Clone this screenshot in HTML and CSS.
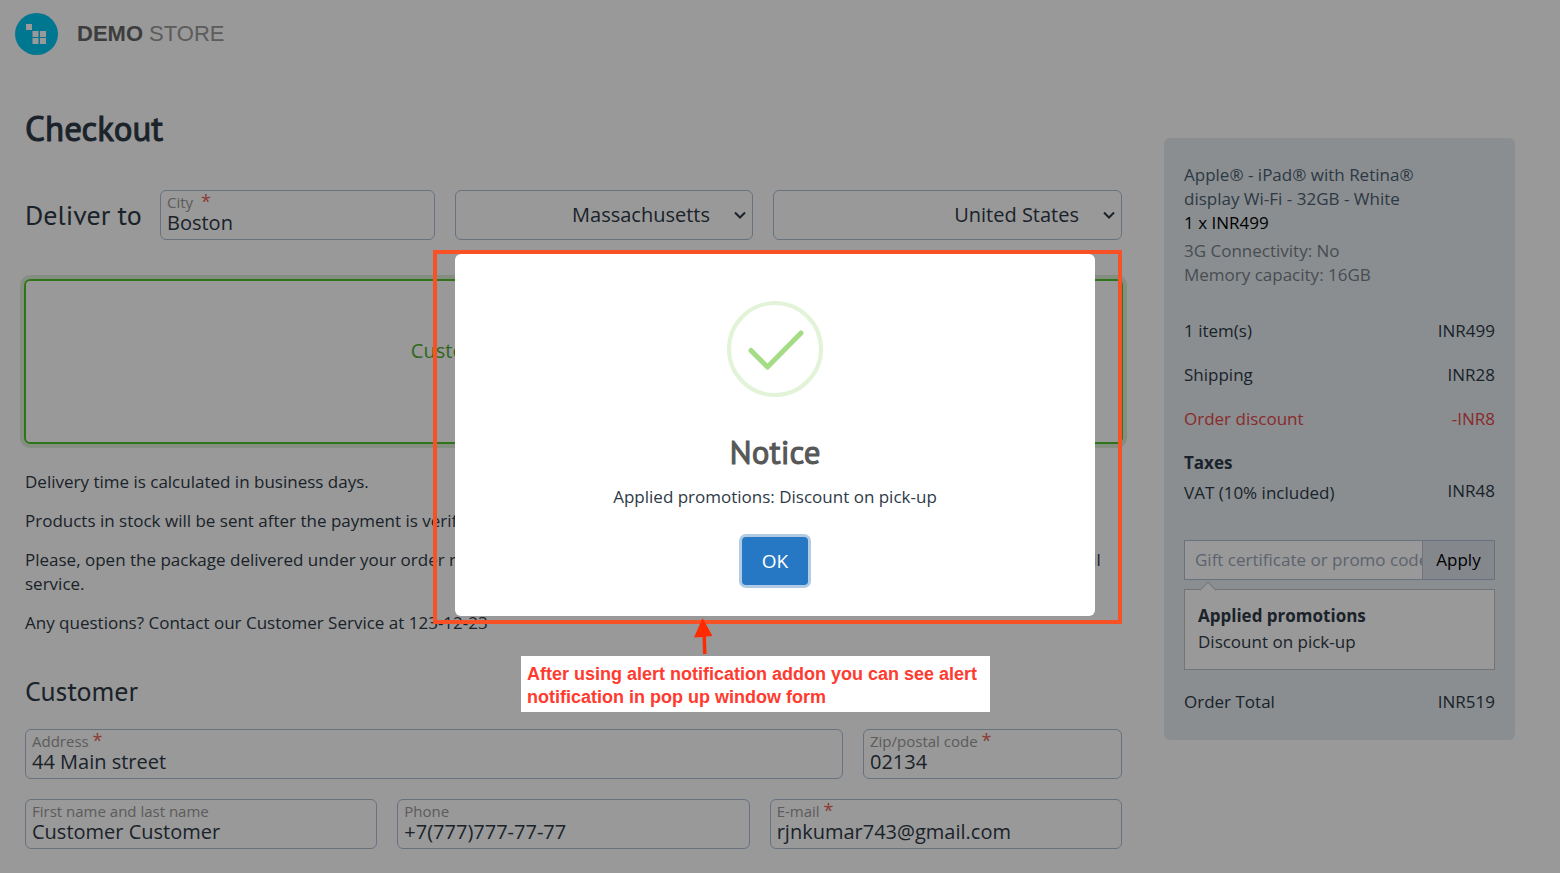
FILE: index.html
```html
<!DOCTYPE html>
<html lang="en">
<head>
<meta charset="utf-8">
<title>Checkout - Demo Store</title>
<link rel="stylesheet" href="styles.css">
</head>
<body>
<div class="page">
  <header class="header">
    <a class="logo" href="#">
      <svg class="logo-mark" width="43" height="42" viewBox="0 0 43 42" aria-hidden="true">
        <ellipse cx="21.500" cy="21" rx="21.500" ry="21" fill="#00c6f0"/>
        <g fill="#fff">
          <rect x="11" y="11" width="6" height="6"/>
          <rect x="17.500" y="18" width="6" height="6"/>
          <rect x="25" y="18" width="6" height="6"/>
          <rect x="17.500" y="25" width="6" height="6"/>
          <rect x="25" y="25" width="6" height="6"/>
        </g>
      </svg>
      <span class="logo-text"><b>DEMO</b> STORE</span>
    </a>
  </header>

  <div class="columns">
    <main class="main">
      <h1 class="title">Checkout</h1>

      <section class="deliver">
        <h2 class="subtitle">Deliver to</h2>
        <div class="field">
          <label for="city">City &nbsp;<span class="required">*</span></label>
          <input id="city" type="text" value="Boston">
        </div>
        <div class="select">
          <select aria-label="State"><option>Massachusetts</option></select>
          <svg class="chevron" width="12" height="8" viewBox="0 0 12 8" aria-hidden="true"><path d="M1 1.500 6 6.500 11 1.500" fill="none" stroke="currentColor" stroke-width="2"/></svg>
        </div>
        <div class="select">
          <select aria-label="Country"><option>United States</option></select>
          <svg class="chevron" width="12" height="8" viewBox="0 0 12 8" aria-hidden="true"><path d="M1 1.500 6 6.500 11 1.500" fill="none" stroke="currentColor" stroke-width="2"/></svg>
        </div>
      </section>

      <button class="method" type="button">Customer pick-up at the store, free</button>

      <section class="notes">
        <p>Delivery time is calculated in business days.</p>
        <p>Products in stock will be sent after the payment is verified.</p>
        <p>Please, open the package delivered under your order number exclusively in the presence of the representative of the courier or the mail service.</p>
        <p>Any questions? Contact our Customer Service at 123-12-23</p>
      </section>

      <section class="customer">
        <h2 class="subtitle">Customer</h2>
        <div class="row row-address">
          <div class="field">
            <label for="address">Address <span class="required">*</span></label>
            <input id="address" type="text" value="44 Main street">
          </div>
          <div class="field">
            <label for="zip">Zip/postal code <span class="required">*</span></label>
            <input id="zip" type="text" value="02134">
          </div>
        </div>
        <div class="row row-contact">
          <div class="field">
            <label for="name">First name and last name</label>
            <input id="name" type="text" value="Customer Customer">
          </div>
          <div class="field">
            <label for="phone">Phone</label>
            <input id="phone" type="tel" value="+7(777)777-77-77">
          </div>
          <div class="field">
            <label for="email">E-mail <span class="required">*</span></label>
            <input id="email" type="email" value="rjnkumar743@gmail.com">
          </div>
        </div>
      </section>
    </main>

    <aside class="summary">
      <div class="product">
        <a class="product-name" href="#">Apple® - iPad® with Retina® display Wi-Fi - 32GB - White</a>
        <div class="product-price">1 x INR499</div>
        <div class="product-options">3G Connectivity: No<br>Memory capacity: 16GB</div>
      </div>
      <dl class="totals">
        <div><dt>1 item(s)</dt><dd>INR499</dd></div>
        <div><dt>Shipping</dt><dd>INR28</dd></div>
        <div class="discount"><dt>Order discount</dt><dd>-INR8</dd></div>
      </dl>
      <div class="taxes">
        <b>Taxes</b>
        <div class="tax-row"><span>VAT (10% included)</span><span class="tax-amount">INR48</span></div>
      </div>
      <form class="promo">
        <input type="text" aria-label="Gift certificate or promo code" placeholder="Gift certificate or promo code">
        <button type="button">Apply</button>
      </form>
      <div class="applied">
        <b>Applied promotions</b>
        <div>Discount on pick-up</div>
      </div>
      <div class="total"><span>Order Total</span><span>INR519</span></div>
    </aside>
  </div>
</div>

<div class="overlay">
  <div class="popup">
    <div class="modal" role="dialog" aria-labelledby="notice-title">
      <svg class="success" width="96" height="96" viewBox="0 0 96 96" aria-hidden="true">
        <circle cx="48" cy="48" r="46" fill="none" stroke="#e2f3d8" stroke-width="4"/>
        <path d="M24 49.500 40.500 66 74 32" fill="none" stroke="#a5dc86" stroke-width="5" stroke-linecap="round" stroke-linejoin="round"/>
      </svg>
      <h2 class="modal-title" id="notice-title">Notice</h2>
      <p class="modal-text">Applied promotions: Discount on pick-up</p>
      <button class="ok" type="button">OK</button>
    </div>
    <div class="frame"></div>
    <div class="callout">
      <svg class="arrow" width="20" height="38" viewBox="0 0 20 38" aria-hidden="true"><path d="M8.500 0 18.500 18 12 18.500 12.500 36H9L8.500 19 0 19.500Z" fill="#ff2a00"/></svg>
      <p>After using alert notification addon you can see alert notification in pop up window form</p>
    </div>
  </div>
</div>
</body>
</html>
```
FILE: styles.css
```css
* {
  box-sizing: border-box;
}

html,
body {
  height: 100%;
}

body {
  margin: 0;
  overflow: hidden;
  background: #fff;
  color: #2e3a47;
  font-family: "Open Sans", "Noto Sans", sans-serif;
  font-size: 17px;
  line-height: 24px;
}

h1,
h2,
p,
dl,
dd {
  margin: 0;
}

a {
  color: inherit;
  text-decoration: none;
}

input,
select,
button {
  min-width: 0;
  border: 0;
  padding: 0;
  background: none;
  color: inherit;
  font: inherit;
}

.header {
  padding: 13px 15px 0;
}

.logo {
  display: flex;
  align-items: center;
  gap: 19px;
}

.logo-text {
  color: #9a9a9a;
  font-family: "Liberation Sans", Arial, sans-serif;
  font-size: 22px;
}

.logo-text b {
  color: #666;
}

.columns {
  display: grid;
  grid-template-columns: minmax(0, 1fr) 351px;
  align-items: start;
  gap: 42px;
  padding: 51px 45px 0 25px;
}

.title,
.subtitle,
.modal-title {
  font-family: "PT Sans", "Noto Sans", sans-serif;
  font-weight: 400;
}

.title,
.modal-title {
  -webkit-text-stroke: 1px currentColor;
}

.title {
  font-size: 35px;
  line-height: 44px;
}

.subtitle {
  font-size: 28px;
  line-height: 36px;
}

.deliver {
  display: grid;
  grid-template-columns: 115px minmax(0, 275fr) minmax(0, 298fr) minmax(0, 349fr);
  align-items: center;
  gap: 20px;
  margin-top: 40px;
}

.deliver .subtitle {
  white-space: nowrap;
}

.field,
.select {
  height: 50px;
  border: 1px solid #acbfd3;
  border-radius: 6px;
}

.field {
  display: flex;
  flex-direction: column;
  padding: 3px 6px 0;
}

.field label {
  color: #999;
  font-size: 15px;
  line-height: 17px;
}

.field input {
  height: 24px;
  font-size: 20px;
  line-height: 24px;
}

.required {
  color: #e86458;
  font-size: 18px;
  line-height: 1px;
}

.select {
  display: flex;
  align-items: center;
  padding: 0 6px;
}

.select select {
  flex: 1;
  height: 48px;
  appearance: none;
  font-size: 20px;
  text-align: right;
  text-align-last: right;
  padding-right: 24px;
}

.chevron {
  flex: none;
}

.method {
  display: block;
  width: calc(100% + 2px);
  height: 165px;
  margin: 39px -1px 0;
  border: 2px solid #4fc22e;
  border-radius: 6px;
  box-shadow: 0 0 0 4px #dcefd7;
  color: #4fae2e;
  font-size: 20px;
  padding-bottom: 22px;
}

.notes {
  display: grid;
  gap: 15px;
  margin-top: 26px;
}

.customer {
  display: grid;
  gap: 20px;
  margin-top: 38px;
}

.row {
  display: grid;
  gap: 20px;
}

.row-address {
  grid-template-columns: minmax(0, 818fr) minmax(0, 259fr);
}

.row-contact {
  grid-template-columns: repeat(3, minmax(0, 1fr));
}

.summary {
  margin-top: 32px;
  padding: 25px 20px 26px;
  border-radius: 6px;
  background: #e6edf2;
}

.product-name {
  display: block;
  max-width: 260px;
  color: #4d6070;
}

.product-price {
  color: #000;
}

.product-options {
  margin-top: 4px;
  color: #788089;
}

.totals {
  display: grid;
  gap: 20px;
  margin-top: 32px;
}

.totals div,
.tax-row,
.total {
  display: flex;
  justify-content: space-between;
}

.discount {
  color: #e44848;
}

.taxes {
  margin-top: 20px;
}

.tax-row {
  margin-top: 6px;
}

.tax-amount {
  line-height: 20px;
}

.promo {
  display: flex;
  height: 40px;
  margin-top: 35px;
  border: 1px solid #acbfd3;
  background: #fff;
}

.promo input {
  flex: 1;
  padding-left: 10px;
}

.promo input::placeholder {
  color: #9aa5b8;
  opacity: 1;
}

.promo button {
  width: 72px;
  border-left: 1px solid #b8c2cc;
  background: #dce2ea;
  color: #000;
}

.applied {
  position: relative;
  margin-top: 9px;
  padding: 13px 13px 14px;
  border: 1px solid #bfc4c8;
  background: #fff;
  line-height: 26px;
}

.applied::before {
  content: "";
  position: absolute;
  top: -6px;
  left: 17px;
  width: 11px;
  height: 11px;
  border: solid #bfc4c8;
  border-width: 1px 0 0 1px;
  background: #fff;
  transform: rotate(45deg);
}

.total {
  margin-top: 20px;
}

.overlay {
  position: fixed;
  inset: 0;
  display: flex;
  align-items: center;
  justify-content: center;
  padding: 0 10px 3px 0;
  background: rgba(0, 0, 0, 0.4);
}

.popup {
  position: relative;
}

.modal {
  display: flex;
  flex-direction: column;
  align-items: center;
  width: 640px;
  max-width: 100%;
  padding: 47px 20px 31px;
  border-radius: 6px;
  background: #fff;
}

.modal-title {
  margin-top: 31px;
  color: #575757;
  font-size: 33px;
  line-height: 48px;
}

.modal-text {
  margin-top: 9px;
}

.ok {
  width: 66px;
  height: 48px;
  margin-top: 28px;
  border-radius: 4px;
  background: #2778c4;
  box-shadow: 0 0 0 3px #b1cbe5;
  color: #fff;
  font-size: 19px;
}

.frame {
  position: absolute;
  inset: -4px -27px -8px -22px;
  border: 4px solid #f95126;
}

.callout {
  position: absolute;
  top: calc(100% + 40px);
  left: 66px;
  width: 469px;
  padding: 7px 6px 3px;
  background: #fff;
  color: #ff3b30;
  font-family: "Liberation Sans", Arial, sans-serif;
  font-size: 18px;
  font-weight: 700;
  line-height: 23px;
}

.arrow {
  position: absolute;
  bottom: 100%;
  left: 173px;
}
```
